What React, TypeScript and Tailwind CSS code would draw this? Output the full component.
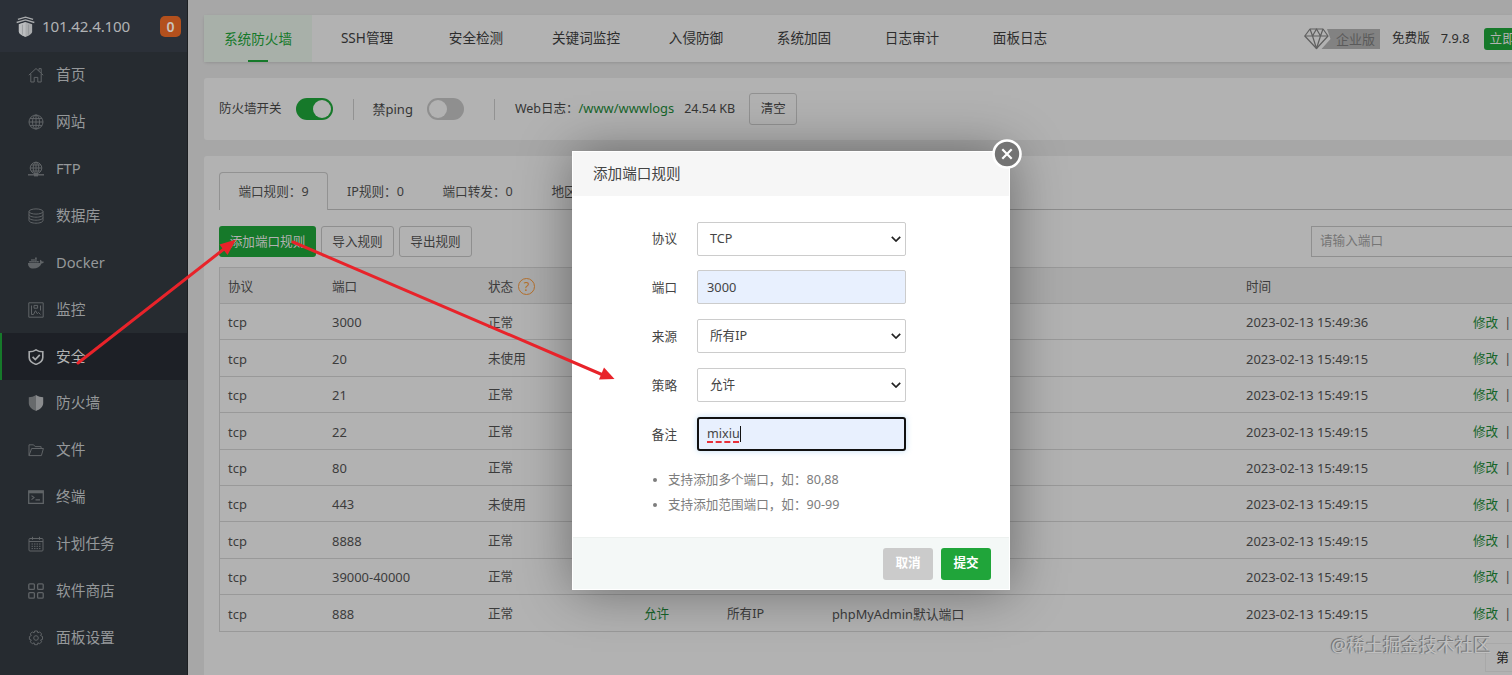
import type { ReactNode } from 'react';
import { FaDocker } from 'react-icons/fa';

function Icon({ children }: { children: ReactNode }) {
  return (
    <svg viewBox="0 0 16 16" className="size-4" fill="none" stroke="currentColor" strokeWidth="1">
      {children}
    </svg>
  );
}

const menu: { label: string; icon: ReactNode; active?: boolean }[] = [
  {
    label: '首页',
    icon: (
      <Icon>
        <path d="M.8 8.2 8 1.5l7.200 6.700M2.800 7v8h3.400v-4.600h3.600V15h3.400V7M11 3.800V1.600h2.200v4.600" />
      </Icon>
    ),
  },
  {
    label: '网站',
    icon: (
      <Icon>
        <circle cx="8" cy="8" r="7" />
        <ellipse cx="8" cy="8" rx="3.5" ry="7" />
        <path d="M8 1v14M1 8h14M2 4.600h12M2 11.400h12" />
      </Icon>
    ),
  },
  {
    label: 'FTP',
    icon: (
      <Icon>
        <circle cx="8" cy="7" r="5.800" />
        <ellipse cx="8" cy="7" rx="2.800" ry="5.800" />
        <path d="M8 1v12M2.200 7h11.600M3 4h10M3 10h10" />
        <path d="M0 13.800h16" strokeWidth="1.400" />
        <path d="M6 14.200h4" strokeWidth="2.400" />
      </Icon>
    ),
  },
  {
    label: '数据库',
    icon: (
      <Icon>
        <ellipse cx="8" cy="3.500" rx="7" ry="2.600" />
        <path d="M1 3.500v9C1 14 4 15.200 8 15.200s7-1.200 7-2.700v-9M1 6.600c0 1.400 3 2.600 7 2.600s7-1.200 7-2.600M1 9.600c0 1.400 3 2.600 7 2.600s7-1.200 7-2.600" />
      </Icon>
    ),
  },
  { label: 'Docker', icon: <FaDocker className="size-4" /> },
  {
    label: '监控',
    icon: (
      <Icon>
        <path d="M.8.8h14.400v14.400H.8zM3.500 3.500v9M12.500 3.500v5M6 3.400h3.600v2.800H6zM3.500 12.500h2l2-3.800 1.800 3 1.200-1.200 2 2" />
      </Icon>
    ),
  },
  {
    label: '安全',
    active: true,
    icon: (
      <Icon>
        <path d="M8 .8C6 2.200 3.600 2.800 1.200 2.800v5.600c0 3.200 3 5.600 6.800 7 3.800-1.400 6.800-3.800 6.800-7V2.800C12.400 2.800 10 2.200 8 .8z" strokeWidth="1.600" />
        <path d="m4.600 7.800 2.700 2.700 4.500-4.700" strokeWidth="1.700" />
      </Icon>
    ),
  },
  {
    label: '防火墙',
    icon: (
      <svg viewBox="0 0 16 16" className="size-4" fill="#8a8c8e">
        <path d="M8 0C5.800 1.500 3 2.200.8 2.300v6C.8 12 4.400 14.600 8 16z" opacity=".65" />
        <path d="M8 0c2.200 1.500 5 2.200 7.200 2.300v6c0 3.700-3.600 6.300-7.200 7.700z" />
      </svg>
    ),
  },
  {
    label: '文件',
    icon: (
      <Icon>
        <path d="M1 13.600V2.800h4.600l1.500 1.800h6v1.900M1 13.600 3.600 6.500h11.800l-2 7.100z" />
      </Icon>
    ),
  },
  {
    label: '终端',
    icon: (
      <Icon>
        <path d="M.7 2h14.600v12.300H.7z" strokeWidth="1.300" />
        <path d="M.7 3h14.600" strokeWidth="2.600" />
        <path d="m3.500 6.600 2.500 2-2.500 2M7.500 10.800h4.500" strokeWidth="1.200" />
      </Icon>
    ),
  },
  {
    label: '计划任务',
    icon: (
      <Icon>
        <rect x="1" y="2.500" width="14" height="12.500" rx="1" />
        <path d="M1 5.500h14M4.500.8v3M11.500.8v3" />
        <path d="M3.500 8h9M3.500 10.300h9M3.500 12.600h9" strokeDasharray="1.500 1" />
      </Icon>
    ),
  },
  {
    label: '软件商店',
    icon: (
      <Icon>
        <g strokeWidth="1.300">
          <rect x=".8" y=".8" width="5.600" height="5.600" rx="1" />
          <rect x="9.600" y=".8" width="5.600" height="5.600" rx="1" />
          <rect x=".8" y="9.600" width="5.600" height="5.600" rx="1" />
          <rect x="9.600" y="9.600" width="5.600" height="5.600" rx="1" />
        </g>
      </Icon>
    ),
  },
  {
    label: '面板设置',
    icon: (
      <Icon>
        <path d="M6.600 1h2.800l.5 1.900 1.700-1 2 2-1 1.700 1.900.9v2.900l-1.900.6 1 1.800-2 2-1.700-1-.5 1.900H6.600l-.5-1.900-1.800 1-2-2 1-1.800-1.900-.6V6.500l1.900-.9-1-1.700 2-2 1.800 1z" />
        <circle cx="8" cy="8" r="2.300" />
      </Icon>
    ),
  },
];

const tabs = [
  { label: 'SSH管理', width: 'w-[110px]' },
  { label: '安全检测', width: 'w-[108px]' },
  { label: '关键词监控', width: 'w-[112px]' },
  { label: '入侵防御', width: 'w-[108px]' },
  { label: '系统加固', width: 'w-[108px]' },
  { label: '日志审计', width: 'w-[108px]' },
  { label: '面板日志', width: 'w-[108px]' },
];

type Rule = { port: string; state: string; time: string; policy?: string; source?: string; note?: string };

const T = '2023-02-13 15:49:15';
const rules: Rule[] = [
  { port: '3000', state: '正常', time: '2023-02-13 15:49:36' },
  { port: '20', state: '未使用', time: T },
  { port: '21', state: '正常', time: T },
  { port: '22', state: '正常', time: T },
  { port: '80', state: '正常', time: T },
  { port: '443', state: '未使用', time: T },
  { port: '8888', state: '正常', time: T },
  { port: '39000-40000', state: '正常', time: T },
  { port: '888', state: '正常', time: T, policy: '允许', source: '所有IP', note: 'phpMyAdmin默认端口' },
];

const cols = 'grid grid-cols-[104px_156px_156px_83px_105px_414px_227px_120px] items-center pl-[8px] pt-[3px]';

function Sidebar() {
  return (
    <aside className="flex w-[188px] shrink-0 flex-col border-r border-[#1c1f22] bg-[#262b30]">
      <div className="flex h-[52px] shrink-0 items-center bg-[#2b3038] pl-4 pr-[6px]">
        <svg viewBox="0 0 20 22" className="h-[21px] w-[19px]">
          <path d="M3 8.500 10 6.300l7 2.200v7.800c0 2.700-4 4.500-7 5.700-3-1.200-7-3-7-5.700z" fill="#a9abad" />
          <path d="M10 6.500v15.300c-3-1.200-7-3-7-5.500V8.700z" fill="#bbbdbf" />
          <path d="M6.800 9v10.500M13.200 9v10.500" stroke="#85888c" strokeWidth=".6" />
          <path d="M2 3.600 10 1.100l8 2.500M.7 6.800 10 4l9.300 2.800" fill="none" stroke="#a9abad" strokeWidth="1.400" />
        </svg>
        <span className="ml-[7px] text-[15.200px] tracking-[-0.200px] text-[#b0b2b4]">101.42.4.100</span>
        <span className="ml-auto flex h-[21px] w-[21px] items-center justify-center rounded-[5px] bg-[#b3501d] text-[14px] font-semibold text-[#c9c2be]">
          0
        </span>
      </div>
      {menu.map((m) => (
        <div
          key={m.label}
          className={
            m.active
              ? 'flex h-[46.870px] shrink-0 items-center border-l-2 border-[#16792a] bg-[#1d2026] pl-[26px] text-[#a9abad]'
              : 'flex h-[46.870px] shrink-0 items-center pl-[28px] text-[#606467]'
          }
        >
          {m.icon}
          <span className={m.active ? 'ml-3 pb-[2px] text-[14.700px] text-[#b2b2b2]' : 'ml-3 pb-[2px] text-[14.700px] text-[#95989a]'}>
            {m.label}
          </span>
        </div>
      ))}
    </aside>
  );
}

function TopTabs() {
  return (
    <div className="flex h-[47px] shrink-0 items-center rounded-l-[3px] bg-[#b2b2b2] text-[13.600px] text-[#2d2d2d] shadow-[0_1px_3px_rgba(0,0,0,0.12)]">
      <div className="flex h-full w-[108px] shrink-0 flex-col items-center justify-between bg-[#a8b0a9] text-[#16792a]">
        <span className="leading-[47px]">系统防火墙</span>
        <span className="-mt-0.5 h-[2px] w-5 shrink-0 bg-[#16792a]" />
      </div>
      {tabs.map((t) => (
        <div key={t.label} className={`shrink-0 text-center ${t.width}`}>
          {t.label}
        </div>
      ))}
      <div className="ml-[230px] flex h-[22px] shrink-0 items-center">
        <div className="grid">
          <svg viewBox="0 0 76 22" className="col-start-1 row-start-1 h-[22px] w-[76px]" fill="none">
            <path d="M23 1h53v20H17.500l9-10z" fill="#828282" />
            <g stroke="#5f5f5f" strokeWidth="1.200" strokeLinejoin="round">
              <path d="M6 1h13l5 7-11.500 12.500L.8 8z" />
              <path d="M.8 8H24M6 1l2.500 7 4 12.500L16.500 8 19 1M8.500 8l4-7 4 7" />
            </g>
          </svg>
          <span className="col-start-1 row-start-1 self-center pl-[32px] text-[13px] leading-[20px] text-[#5a5a5a]">企业版</span>
        </div>
        <span className="ml-[12px] whitespace-nowrap text-[12.600px]">免费版</span>
        <span className="ml-[11px] text-[12.800px]">7.9.8</span>
        <span className="ml-[14px] h-[22px] w-[60px] rounded-[3px] bg-[#16792a] pl-[6px] text-[12.600px] leading-[22px] text-[#b2b2b2]">立即</span>
      </div>
    </div>
  );
}

function SwitchPanel() {
  return (
    <div className="mt-4 flex h-[62px] shrink-0 items-center rounded-l-[3px] bg-[#b2b2b2] pl-[15px] text-[12.500px] text-[#353535]">
      <span className="pt-px">防火墙开关</span>
      <span className="ml-[14px] flex h-[22px] w-[37px] items-center justify-end rounded-full bg-[#16792a] pr-[1.500px]">
        <span className="size-[18px] rounded-full bg-[#b2b2b2]" />
      </span>
      <span className="ml-[20px] h-[21px] w-px bg-[#929292]" />
      <span className="ml-[19px] pt-px text-[13px]">禁ping</span>
      <span className="ml-[14px] flex h-[22px] w-[37px] items-center rounded-full bg-[#8f8f8f] pl-[2px]">
        <span className="size-[18px] rounded-full bg-[#b2b2b2]" />
      </span>
      <span className="ml-[30px] h-[21px] w-px bg-[#929292]" />
      <span className="ml-[20px]">Web日志：</span>
      <span className="text-[12.900px] text-[#16652a]">/www/wwwlogs</span>
      <span className="ml-[10px]">24.54 KB</span>
      <span className="ml-[14px] flex h-[32px] w-[48px] items-center justify-center rounded-[3px] border border-[#929292]">清空</span>
    </div>
  );
}

function RulesPanel() {
  const action = 'flex h-[31px] w-[73px] items-center justify-center rounded-[3px] border border-[#8f8f8f] pt-px';
  return (
    <div className="mt-4 flex h-[540px] shrink-0 flex-col rounded-l-[3px] bg-[#b2b2b2] pl-[15px] pt-4 text-[12.600px] text-[#3c3c3c]">
      <div className="flex h-[38px] shrink-0">
        <div className="flex w-[109px] items-center justify-center rounded-t-[4px] border border-b-0 border-[#929292] pt-[2px]">端口规则：9</div>
        <div className="flex flex-1 items-center border-b border-[#8c8c8c] pl-[19px] pt-[4px]">
          <span className="w-[95.500px] whitespace-nowrap">IP规则：0</span>
          <span className="w-[109px] whitespace-nowrap">端口转发：0</span>
          <span>地区</span>
        </div>
      </div>
      <div className="mt-4 flex h-[31px] shrink-0 items-center">
        <div className="flex h-[31px] w-[97px] items-center justify-center rounded-[3px] bg-[#16792a] pt-px text-[#b2b2b2]">添加端口规则</div>
        <div className={`ml-[5px] ${action}`}>导入规则</div>
        <div className={`ml-[5px] ${action}`}>导出规则</div>
        <div className="ml-auto flex h-[31px] w-[201px] items-center border border-r-0 border-[#8f8f8f] pl-[8px] text-[#757575]">请输入端口</div>
      </div>
      <div className="mt-[10px] border border-r-0 border-[#999]">
        <div className={`h-[36px] border-b border-[#999] bg-[#aaaaaa] ${cols}`}>
          <span>协议</span>
          <span>端口</span>
          <span className="flex items-center">
            状态
            <span className="ml-[5px] flex size-[17px] items-center justify-center rounded-full border border-[#b5702c] text-[13px] leading-none text-[#b5702c]">
              ?
            </span>
          </span>
          <span />
          <span />
          <span />
          <span>时间</span>
          <span />
        </div>
        {rules.map((r, i) => (
          <div key={r.port} className={`h-[36.380px] text-[12.950px] ${i < rules.length - 1 ? 'border-b border-[#999]' : ''} ${cols}`}>
            <span>tcp</span>
            <span>{r.port}</span>
            <span className="text-[12.600px]">{r.state}</span>
            <span className="text-[12.600px] text-[#16652a]">{r.policy}</span>
            <span className="text-[12.600px]">{r.source}</span>
            <span className="text-[12.800px]">{r.note}</span>
            <span className="whitespace-nowrap">{r.time}</span>
            <span className="whitespace-nowrap text-[12.600px]">
              <span className="text-[#16652a]">修改</span>
              <span className="ml-[6px]">|</span>
            </span>
          </div>
        ))}
      </div>
      <div className="mt-[11px] flex justify-end">
        <div className="h-[29px] w-[27px] border border-r-0 border-[#a8a8a8] pl-[10px] text-[13px] leading-[27px] text-[#222]">第</div>
      </div>
    </div>
  );
}

function Field({ label, children }: { label: string; children: ReactNode }) {
  return (
    <div className="flex h-[34px] items-center">
      <span className="w-[105px] pt-[2px] text-right">{label}</span>
      {children}
    </div>
  );
}

function Select({ value }: { value: string }) {
  return (
    <div className="ml-[20px] flex h-[34px] w-[209px] items-center justify-between rounded-[2px] border border-[#ccc] pl-[12px] pr-[4px]">
      <span className="pt-px">{value}</span>
      <svg viewBox="0 0 10 6" className="h-[6px] w-[10px]" fill="none" stroke="#222" strokeWidth="1.700">
        <path d="m.8.8 4.200 4.200L9.200.8" />
      </svg>
    </div>
  );
}

function Dialog() {
  return (
    <div className="absolute left-[572px] top-[151px] flex h-[439px] w-[438px] flex-col bg-white text-[12.600px] text-[#444] shadow-[1px_1px_50px_rgba(0,0,0,0.4)]">
      <div className="m-[1px] mb-0 h-[44px] shrink-0 bg-[#f6f6f6] pl-5 text-[14.600px] leading-[43px] text-[#444]">添加端口规则</div>
      <div className="flex flex-1 flex-col gap-[14.900px] pt-[25.500px]">
        <Field label="协议">
          <Select value="TCP" />
        </Field>
        <Field label="端口">
          <div className="ml-[20px] flex h-[34px] w-[209px] items-center rounded-[2px] border border-[#ccc] bg-[#e8f0fe] pl-[9px] text-[12.800px]">3000</div>
        </Field>
        <Field label="来源">
          <Select value="所有IP" />
        </Field>
        <Field label="策略">
          <Select value="允许" />
        </Field>
        <Field label="备注">
          <div className="ml-[20px] flex h-[34px] w-[209px] items-center rounded-[3px] border-2 border-[#111] bg-[#e8f0fe] pl-[8px] text-[12.600px] shadow-[0_0_6px_rgba(102,175,233,0.4)]">
            <span className="underline decoration-[#e8303a] decoration-dashed decoration-[1.500px] underline-offset-4">mixiu</span>
            <span className="h-[16px] w-px bg-[#111]" />
          </div>
        </Field>
        <ul className="mt-[1.500px] list-disc pl-[96px] leading-[25px] text-[#7d7d7d]">
          <li>支持添加多个端口，如：80,88</li>
          <li>支持添加范围端口，如：90-99</li>
        </ul>
      </div>
      <div className="m-[1px] mt-0 flex h-[52px] shrink-0 items-center justify-end gap-2 border-t border-[#edf1ef] bg-[#f4f8f7] pr-[18px] font-bold text-white">
        <div className="flex h-8 w-[50px] items-center justify-center rounded-[3px] bg-[#cbcbcb]">取消</div>
        <div className="flex h-8 w-[50px] items-center justify-center rounded-[3px] bg-[#20a53a]">提交</div>
      </div>
      <svg viewBox="0 0 30 30" className="absolute -right-[12px] -top-[12px] size-[30px]">
        <circle cx="15" cy="15" r="13.500" fill="#747474" stroke="#fff" strokeWidth="2.600" />
        <path d="m10.300 10.300 9.400 9.400m0-9.400-9.400 9.400" stroke="#fff" strokeWidth="2.200" />
      </svg>
    </div>
  );
}

export default function App() {
  return (
    <div className="relative flex h-[675px] w-[1512px] overflow-hidden bg-[#a7a7a7] font-['Noto_Sans','Noto_Sans_CJK_SC',sans-serif]">
      <Sidebar />
      <main className="flex min-w-0 flex-1 flex-col overflow-hidden pl-4 pt-[15px]">
        <TopTabs />
        <SwitchPanel />
        <RulesPanel />
      </main>
      <Dialog />
      <svg className="absolute inset-0 h-[675px] w-[1512px]" viewBox="0 0 1512 675" fill="#e8232a" stroke="#e8232a">
        <path d="M78 363 224 249" strokeWidth="3" strokeLinecap="round" />
        <path d="M236 239.500 219.500 244.500 227.500 255z" stroke="none" />
        <path d="M293 242 603 375" strokeWidth="3" strokeLinecap="round" />
        <path d="M614.500 379 604 367.500 599 379.500z" stroke="none" />
      </svg>
      <div className="absolute left-[1331px] top-[633px] whitespace-nowrap text-[18px] leading-[24px] text-[#c0c0c0] [text-shadow:-1px_-1px_0_#777,-1px_0_1px_#777]">
        @稀土掘金技术社区
      </div>
    </div>
  );
}
